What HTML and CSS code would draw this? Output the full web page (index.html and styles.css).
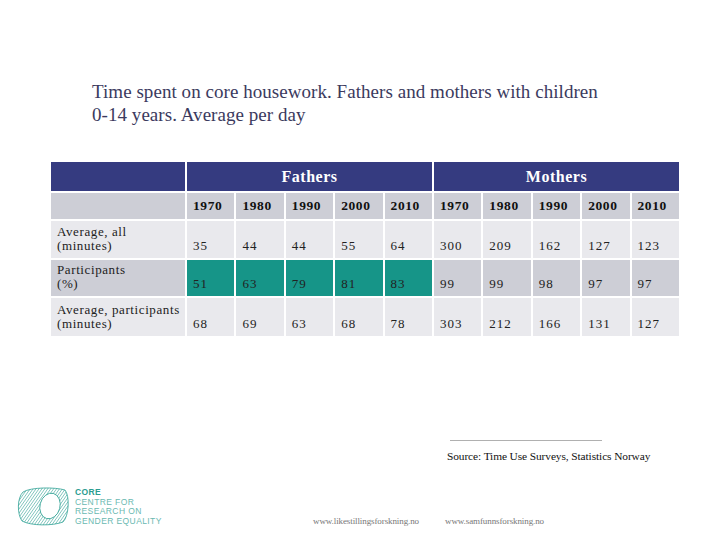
FILE: index.html
```html
<!DOCTYPE html>
<html>
<head>
<meta charset="utf-8">
<link rel="stylesheet" href="styles.css">
</head>
<body>
<div class="page">
  <h1 class="title">Time spent on core housework. Fathers and mothers with children<br>0-14 years. Average per day</h1>

  <div class="table">
    <div class="head">
      <div class="hcell"></div>
      <div class="hcell group">Fathers</div>
      <div class="hcell group">Mothers</div>
    </div>
    <div class="body">
      <div class="cell label grey"></div>
      <div class="cell year">1970</div><div class="cell year">1980</div><div class="cell year">1990</div><div class="cell year">2000</div><div class="cell year">2010</div>
      <div class="cell year">1970</div><div class="cell year">1980</div><div class="cell year">1990</div><div class="cell year">2000</div><div class="cell year">2010</div>

      <div class="cell label light">Average, all<br>(minutes)</div>
      <div class="cell light">35</div><div class="cell light">44</div><div class="cell light">44</div><div class="cell light">55</div><div class="cell light">64</div>
      <div class="cell light">300</div><div class="cell light">209</div><div class="cell light">162</div><div class="cell light">127</div><div class="cell light">123</div>

      <div class="cell label grey">Participants<br>(%)</div>
      <div class="cell teal">51</div><div class="cell teal">63</div><div class="cell teal">79</div><div class="cell teal">81</div><div class="cell teal">83</div>
      <div class="cell grey">99</div><div class="cell grey">99</div><div class="cell grey">98</div><div class="cell grey">97</div><div class="cell grey">97</div>

      <div class="cell label light">Average, participants<br>(minutes)</div>
      <div class="cell light">68</div><div class="cell light">69</div><div class="cell light">63</div><div class="cell light">68</div><div class="cell light">78</div>
      <div class="cell light">303</div><div class="cell light">212</div><div class="cell light">166</div><div class="cell light">131</div><div class="cell light">127</div>
    </div>
  </div>

  <div class="source">
    <div class="rule"></div>
    <div class="source-text">Source: Time Use Surveys, Statistics Norway</div>
  </div>

  <div class="footer">
    <div class="logo">
      <svg class="mark" width="52" height="40" viewBox="0 0 52 40">
        <defs>
          <pattern id="hatch" width="2.4" height="2.4" patternUnits="userSpaceOnUse" patternTransform="rotate(35)">
            <line x1="0" y1="0" x2="0" y2="2.4" stroke="#2fa194" stroke-width="1"/>
          </pattern>
          <mask id="hole">
            <rect width="52" height="40" fill="#fff"/>
            <ellipse cx="33" cy="20" rx="10" ry="13" fill="#000" transform="rotate(15 33 20)"/>
          </mask>
        </defs>
        <path d="M6 6 C14 1 38 1 48 4 C53 10 52 30 46 36 C36 40 14 40 5 35 C0 28 0 12 6 6 Z" fill="url(#hatch)" mask="url(#hole)"/>
        <path d="M6 6 C14 1 38 1 48 4 C53 10 52 30 46 36 C36 40 14 40 5 35 C0 28 0 12 6 6 Z" fill="none" stroke="#2fa194" stroke-width="0.8"/>
        <ellipse cx="33" cy="20" rx="10" ry="13" fill="none" stroke="#2fa194" stroke-width="0.8" transform="rotate(15 33 20)"/>
      </svg>
      <div class="logo-text">
        <div class="core">CORE</div>
        <div>CENTRE FOR</div>
        <div>RESEARCH ON</div>
        <div>GENDER EQUALITY</div>
      </div>
    </div>
    <div class="url url1">www.likestillingsforskning.no</div>
    <div class="url url2">www.samfunnsforskning.no</div>
  </div>
</div>
</body>
</html>
```

FILE: styles.css
```css
html, body {
  margin: 0;
  padding: 0;
  background: #ffffff;
}

.page {
  width: 720px;
  height: 540px;
  position: relative;
  overflow: hidden;
  font-family: "Liberation Serif", "DejaVu Serif", serif;
}

.title {
  margin: 0;
  padding: 80px 0 0 92px;
  font-weight: normal;
  font-size: 19px;
  line-height: 23px;
  letter-spacing: 0.05px;
  color: #3b3a5e;
}

.table {
  margin: 36px 0 0 51px;
  width: 628px;
}

.head {
  display: grid;
  grid-template-columns: 134px 245px 245px;
  column-gap: 2px;
  height: 27px;
  margin-bottom: 4px;
}

.hcell {
  background: #353b80;
  color: #ffffff;
  font-weight: bold;
  font-size: 16px;
  letter-spacing: 0.5px;
  text-align: center;
  line-height: 29px;
}

.body {
  display: grid;
  grid-template-columns: 134px repeat(10, 47.4px);
  grid-template-rows: 26px 37px 36px 38px;
  gap: 2px;
}

.cell {
  display: flex;
  align-items: flex-end;
  padding: 0 0 5px 6px;
  font-size: 13px;
  line-height: 14px;
  letter-spacing: 1px;
  color: #222222;
}

.cell.label {
  letter-spacing: 0.6px;
}

.year {
  background: #cdced6;
  font-weight: bold;
  align-items: center;
  padding: 0 0 0 6px;
  font-size: 13.5px;
  letter-spacing: 0.6px;
  color: #111111;
}

.grey { background: #cdced6; }
.light { background: #e9e9ed; }
.teal { background: #169588; }

.source {
  position: absolute;
  left: 447px;
  top: 440px;
}

.rule {
  width: 152px;
  height: 1px;
  margin-left: 3px;
  background: #b0b0b0;
}

.source-text {
  margin-top: 9px;
  font-size: 11.4px;
  color: #111111;
  letter-spacing: -0.1px;
}

.footer {
  position: absolute;
  left: 0;
  top: 0;
  width: 720px;
  height: 540px;
}

.logo {
  position: absolute;
  left: 17px;
  top: 486px;
  display: flex;
  align-items: flex-start;
  gap: 6px;
}

.logo-text {
  margin-top: 2px;
  font-family: "Liberation Sans", Arial, sans-serif;
  font-size: 8.5px;
  line-height: 9.6px;
  letter-spacing: 0.4px;
  color: #6ab9b1;
}

.logo-text .core {
  font-weight: bold;
  color: #2b9c90;
}

.url {
  position: absolute;
  top: 516px;
  font-size: 9px;
  color: #777777;
  letter-spacing: -0.1px;
}

.url1 { left: 313px; }
.url2 { left: 445px; }
```
